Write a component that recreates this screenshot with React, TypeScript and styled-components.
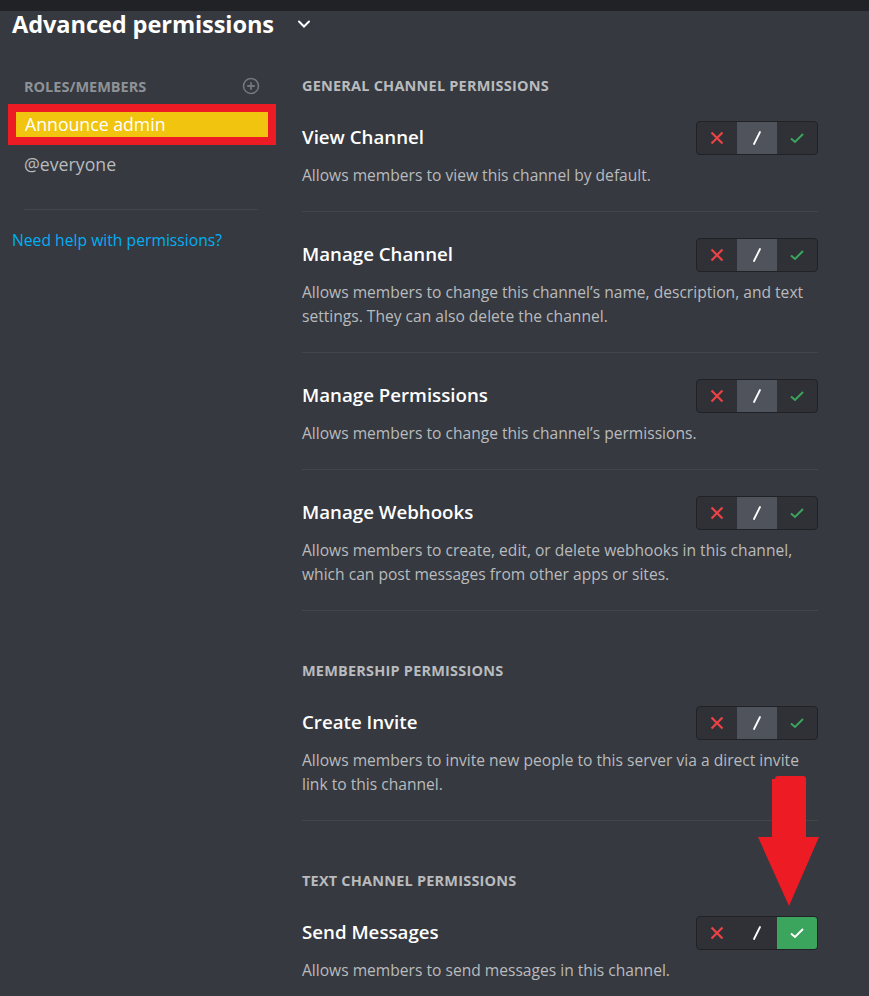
import styled, { createGlobalStyle } from "styled-components";

const GlobalStyle = createGlobalStyle`
  html, body {
    margin: 0;
    padding: 0;
    background: #36393f;
  }
  body {
    font-family: "Open Sans", "Noto Sans", sans-serif;
    color: #dcddde;
  }
`;

type Perm = { title: string; desc: string; state: "deny" | "neutral" | "allow" };
type Section = { heading: string; perms: Perm[] };

const sections: Section[] = [
  {
    heading: "General Channel Permissions",
    perms: [
      { title: "View Channel", desc: "Allows members to view this channel by default.", state: "neutral" },
      {
        title: "Manage Channel",
        desc: "Allows members to change this channel’s name, description, and text settings. They can also delete the channel.",
        state: "neutral",
      },
      { title: "Manage Permissions", desc: "Allows members to change this channel’s permissions.", state: "neutral" },
      {
        title: "Manage Webhooks",
        desc: "Allows members to create, edit, or delete webhooks in this channel, which can post messages from other apps or sites.",
        state: "neutral",
      },
    ],
  },
  {
    heading: "Membership Permissions",
    perms: [
      {
        title: "Create Invite",
        desc: "Allows members to invite new people to this server via a direct invite link to this channel.",
        state: "neutral",
      },
    ],
  },
  {
    heading: "Text Channel Permissions",
    perms: [{ title: "Send Messages", desc: "Allows members to send messages in this channel.", state: "allow" }],
  },
];

const App = () => {
  return (
    <Page>
      <GlobalStyle />
      <TopStrip />
      <Header>
        <HeaderTitle>Advanced permissions</HeaderTitle>
        <svg width="14" height="10" viewBox="0 0 14 10">
          <path d="M2 2.5 L7 7.5 L12 2.5" fill="none" stroke="#fff" strokeWidth="2" strokeLinecap="round" />
        </svg>
      </Header>
      <Body>
        <Sidebar>
          <SideHeading>
            <span>Roles/Members</span>
            <svg width="18" height="18" viewBox="0 0 18 18">
              <circle cx="9" cy="9" r="7.5" fill="none" stroke="#72767d" strokeWidth="1.6" />
              <path d="M9 5.2 V12.8 M5.2 9 H12.8" stroke="#72767d" strokeWidth="1.8" />
            </svg>
          </SideHeading>
          <RoleSelected>Announce admin</RoleSelected>
          <RoleItem>@everyone</RoleItem>
          <SideDivider />
          <HelpLink>Need help with permissions?</HelpLink>
        </Sidebar>
        <Content>
          {sections.map((s) => (
            <SectionBlock key={s.heading}>
              <SectionHeading>{s.heading}</SectionHeading>
              {s.perms.map((p) => (
                <PermRow key={p.title}>
                  <PermTop>
                    <PermTitle>{p.title}</PermTitle>
                    <Toggle>
                      <Seg>
                        <svg width="14" height="14" viewBox="0 0 14 14">
                          <path d="M1.5 1.5 L12.5 12.5 M12.5 1.5 L1.5 12.5" stroke="#ed4245" strokeWidth="2.2" />
                        </svg>
                      </Seg>
                      <Seg $active={p.state === "neutral"}>
                        <svg width="14" height="16" viewBox="0 0 14 16">
                          <path d="M10 2 L4 14" stroke="#fff" strokeWidth="1.8" strokeLinecap="round" />
                        </svg>
                      </Seg>
                      <Seg $allow={p.state === "allow"}>
                        <svg width="16" height="14" viewBox="0 0 16 14">
                          <path
                            d="M2 7.5 L6 11 L14 3"
                            fill="none"
                            stroke={p.state === "allow" ? "#fff" : "#3ba55d"}
                            strokeWidth="2"
                          />
                        </svg>
                      </Seg>
                    </Toggle>
                  </PermTop>
                  <PermDesc>{p.desc}</PermDesc>
                </PermRow>
              ))}
            </SectionBlock>
          ))}
        </Content>
      </Body>
      <Arrow width="62" height="131" viewBox="0 0 62 131">
        <path d="M17 3 Q17 0 20 0 H45 Q48 0 48 3 V61 H61 L31 130 L0 61 H14 V3 Z" fill="#ed1c24" />
      </Arrow>
    </Page>
  );
};

const Page = styled.div`
  position: relative;
  width: 869px;
  height: 996px;
  overflow: hidden;
  background: #36393f;
`;

const TopStrip = styled.div`
  height: 11px;
  background: #202225;
`;

const Header = styled.div`
  display: flex;
  align-items: center;
  gap: 23px;
  height: 26px;
  padding-left: 12px;
`;

const HeaderTitle = styled.div`
  font-size: 23.6px;
  font-weight: 700;
  color: #fff;
  letter-spacing: -0.1px;
`;

const Body = styled.div`
  display: flex;
  margin-top: 41px;
`;

const Sidebar = styled.div`
  width: 268px;
  padding-left: 8px;
  display: flex;
  flex-direction: column;
`;

const SideHeading = styled.div`
  display: flex;
  align-items: center;
  justify-content: space-between;
  height: 16px;
  margin-left: 16px;
  padding-right: 16px;
  font-size: 14.5px;
  font-weight: 700;
  text-transform: uppercase;
  color: #8e9297;
`;

const RoleSelected = styled.div`
  margin-top: 10px;
  border: 8px solid #ed1c24;
  background: #f1c40f;
  height: 25px;
  line-height: 25px;
  padding-left: 9px;
  font-size: 17.7px;
  font-weight: 500;
  color: #fff;
`;

const RoleItem = styled.div`
  margin-top: 7px;
  height: 25px;
  line-height: 25px;
  padding-left: 16px;
  font-size: 17.7px;
  color: #b9bbbe;
`;

const SideDivider = styled.div`
  margin: 32px 18px 0 16px;
  height: 1px;
  background: #42454a;
`;

const HelpLink = styled.div`
  margin: 20px 0 0 4px;
  line-height: 20px;
  font-size: 15.7px;
  color: #00aff4;
`;

const Content = styled.div`
  margin-left: 26px;
  width: 516px;
`;

const SectionBlock = styled.div`
  & + & {
    margin-top: 52px;
  }
`;

const SectionHeading = styled.div`
  height: 16px;
  line-height: 16px;
  margin-bottom: 1px;
  font-size: 14.5px;
  font-weight: 700;
  letter-spacing: 0.2px;
  text-transform: uppercase;
  color: #b9bbbe;
`;

const PermRow = styled.div`
  padding: 26px 0 24px;
  border-bottom: 1px solid #42454a;
`;

const PermTop = styled.div`
  display: flex;
  align-items: center;
  justify-content: space-between;
  height: 34px;
`;

const PermTitle = styled.div`
  font-size: 18.7px;
  font-weight: 600;
  color: #fff;
  margin-top: -3px;
`;

const Toggle = styled.div`
  display: flex;
  height: 32px;
  border: 1px solid #202225;
  border-radius: 4px;
  background: #2f3136;
  overflow: hidden;
`;

const Seg = styled.div<{ $active?: boolean; $allow?: boolean }>`
  width: 40px;
  display: flex;
  align-items: center;
  justify-content: center;
  background: ${(p) => (p.$allow ? "#3ba55d" : p.$active ? "#4f545c" : "transparent")};
`;

const PermDesc = styled.div`
  margin-top: 8px;
  font-size: 15.6px;
  line-height: 24px;
  color: #b9bbbe;
`;

const Arrow = styled.svg`
  position: absolute;
  left: 758px;
  top: 776px;
`;

export default App;
